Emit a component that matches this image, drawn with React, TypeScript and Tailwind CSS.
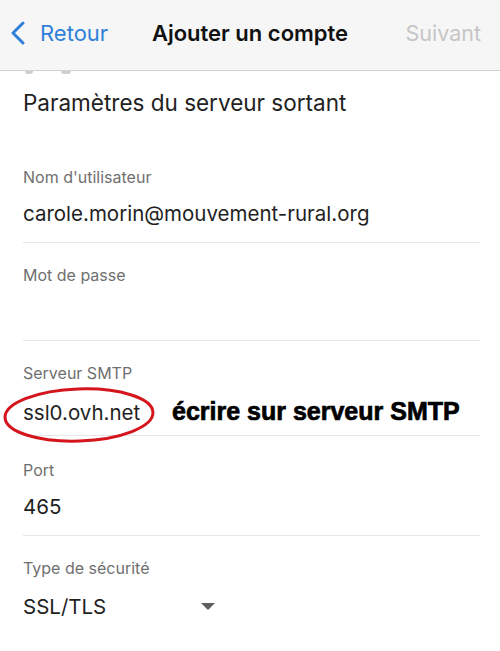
import React from "react";

const Field = ({
  label,
  value,
  top = "pt-[22px]",
  shift = "mt-[15px]",
  children,
}: {
  label: string;
  value?: string;
  top?: string;
  shift?: string;
  children?: React.ReactNode;
}) => (
  <div className={`${top} pb-[16px] border-b border-[#e6e6e6]`}>
    <div className="text-[16px] leading-5 text-[#6f6f6f]">{label}</div>
    <div className={`relative ${shift} h-6 text-[20.5px] leading-6 text-[#1f1f1f]`}>
      {value}
      {children}
    </div>
  </div>
);

export default function App() {
  return (
    <div
      className="w-[500px] h-[651px] bg-white overflow-hidden"
      style={{ fontFamily: "Inter, 'Liberation Sans', sans-serif" }}
    >
      {/* Header */}
      <div className="h-[71px] bg-[#f6f6f6] border-b border-[#d2d2d2] flex items-center px-[10px] pb-[4px]">
        <div className="flex items-center gap-[14px] w-[140px] text-[#2f80d8]">
          <svg width="16" height="24" viewBox="0 0 16 24" fill="none">
            <path
              d="M13 2 L3 12 L13 22"
              stroke="#2f80d8"
              strokeWidth="3"
              strokeLinecap="round"
              strokeLinejoin="round"
            />
          </svg>
          <span className="text-[22px]">Retour</span>
        </div>
        <div className="flex-1 text-center text-[22px] font-semibold text-[#111]">
          Ajouter un compte
        </div>
        <div className="w-[140px] text-right pr-[9px] text-[21.5px] text-[#c6c6c6]">
          Suivant
        </div>
      </div>

      {/* Content */}
      <div className="px-[23px] relative">
        <div className="flex gap-[28px] ml-[2px]">
          <div className="w-[8px] h-[3px] rounded-b bg-[#cfcfcf]" />
          <div className="w-[10px] h-[3px] rounded-b bg-[#cfcfcf]" />
        </div>
        <div className="mt-[15px] text-[22.5px] leading-7 text-[#222]">
          Paramètres du serveur sortant
        </div>

        <div className="mt-[28px] w-[457px]">
          <Field label="Nom d'utilisateur" value="carole.morin@mouvement-rural.org" />
          <Field label="Mot de passe" />
          <Field label="Serveur SMTP" value="ssl0.ovh.net" shift="mt-[18px] mb-[-6px]">
            {/* red annotation */}
            <svg
              className="absolute left-[-22px] top-[-15px]"
              width="156"
              height="58"
              viewBox="0 0 156 58"
              fill="none"
            >
              <ellipse
                cx="78"
                cy="29"
                rx="74"
                ry="26"
                stroke="#d4151c"
                strokeWidth="3"
                transform="rotate(-2 78 29)"
              />
            </svg>
            <span
              className="absolute left-[149px] top-[-6px] whitespace-nowrap text-[25px] leading-8 font-bold text-black [-webkit-text-stroke:0.7px_black]"
              style={{ fontFamily: "'Liberation Sans', Arial, sans-serif" }}
            >
              écrire sur serveur SMTP
            </span>
          </Field>
          <Field label="Port" value="465" top="pt-[24px]" />
          <div className="pt-[22px]">
            <div className="text-[16px] leading-5 text-[#6f6f6f]">
              Type de sécurité
            </div>
            <div className="mt-[17px] h-6 flex items-center text-[20.5px] leading-6 text-[#1f1f1f]">
              <span className="w-[178px]">SSL/TLS</span>
              <svg width="14" height="8" viewBox="0 0 14 8">
                <path d="M0 0 H14 L7 7 Z" fill="#5e5e5e" />
              </svg>
            </div>
          </div>
        </div>
      </div>
    </div>
  );
}
